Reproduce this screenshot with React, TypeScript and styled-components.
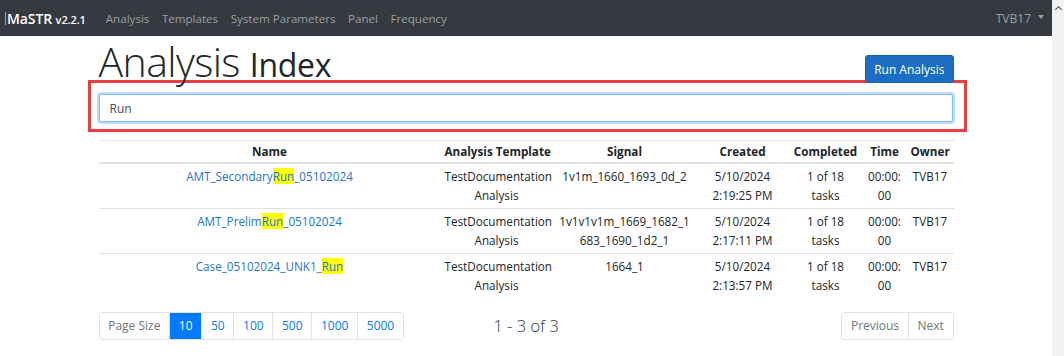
import React from 'react';
import styled, { createGlobalStyle } from 'styled-components';

const GlobalStyle = createGlobalStyle`
  html, body {
    margin: 0;
    padding: 0;
    background: #fff;
    font-family: "Open Sans", "Noto Sans", Arial, sans-serif;
    color: #212529;
    font-size: 12px;
  }
  * { box-sizing: border-box; }
`;

const rows = [
  {
    before: 'AMT_Secondary',
    after: '_05102024',
    template: 'TestDocumentation Analysis',
    signal: '1v1m_1660_1693_0d_2',
    date: '5/10/2024',
    time: '2:19:25 PM',
  },
  {
    before: 'AMT_Prelim',
    after: '_05102024',
    template: 'TestDocumentation Analysis',
    signal: '1v1v1v1m_1669_1682_1683_1690_1d2_1',
    date: '5/10/2024',
    time: '2:17:11 PM',
  },
  {
    before: 'Case_05102024_UNK1_',
    after: '',
    template: 'TestDocumentation Analysis',
    signal: '1664_1',
    date: '5/10/2024',
    time: '2:13:57 PM',
  },
];

const columns = [
  { label: 'Name', width: 342 },
  { label: 'Analysis Template', width: 112 },
  { label: 'Signal', width: 144 },
  { label: 'Created', width: 92 },
  { label: 'Completed', width: 74 },
  { label: 'Time', width: 44 },
  { label: 'Owner', width: 47 },
];

const pageSizes = [10, 50, 100, 500, 1000, 5000];

const App = () => {
  return (
    <>
      <GlobalStyle />
      <Viewport>
        <Page>
          <NavBar>
            <Brand>
              MaSTR <Version>v2.2.1</Version>
            </Brand>
            <NavLinks>
              <NavLink>Analysis</NavLink>
              <NavLink>Templates</NavLink>
              <NavLink>System Parameters</NavLink>
              <NavLink>Panel</NavLink>
              <NavLink>Frequency</NavLink>
            </NavLinks>
            <UserMenu>
              TVB17 <Caret />
            </UserMenu>
          </NavBar>

          <Container>
            <TitleRow>
              <Title>
                Analysis <TitleSub>Index</TitleSub>
              </Title>
              <PrimaryButton>Run Analysis</PrimaryButton>
            </TitleRow>

            <SearchFrame>
              <SearchInput defaultValue="Run" />
            </SearchFrame>

            <Table>
              <colgroup>
                {columns.map((c) => (
                  <col key={c.label} style={{ width: c.width }} />
                ))}
              </colgroup>
              <thead>
                <tr>
                  {columns.map((c) => (
                    <Th key={c.label}>{c.label}</Th>
                  ))}
                </tr>
              </thead>
              <tbody>
                {rows.map((r, idx) => (
                  <tr key={idx}>
                    <Td>
                      <NameLink>
                        {r.before}
                        <Highlight>Run</Highlight>
                        {r.after}
                      </NameLink>
                    </Td>
                    <Td>{r.template}</Td>
                    <Td $breakAnywhere>{r.signal}</Td>
                    <Td>
                      {r.date}
                      <br />
                      {r.time}
                    </Td>
                    <Td>1 of 18 tasks</Td>
                    <Td>
                      00:00:
                      <wbr />
                      00
                    </Td>
                    <Td>TVB17</Td>
                  </tr>
                ))}
              </tbody>
            </Table>

            <PagerRow>
              <PageGroup>
                <PageItem $muted>Page Size</PageItem>
                {pageSizes.map((s) => (
                  <PageItem key={s} $active={s === 10}>
                    {s}
                  </PageItem>
                ))}
              </PageGroup>
              <Count>1 - 3 of 3</Count>
              <PageGroup $right>
                <PageItem $muted>Previous</PageItem>
                <PageItem $muted>Next</PageItem>
              </PageGroup>
            </PagerRow>
          </Container>
        </Page>

        <ScrollTrack>
          <ScrollArrow />
        </ScrollTrack>
      </Viewport>
    </>
  );
};

export default App;

const Viewport = styled.div`
  display: flex;
  width: 1064px;
  height: 356px;
  overflow: hidden;
`;

const Page = styled.div`
  flex: 1;
  min-width: 0;
`;

const ScrollTrack = styled.div`
  width: 12px;
  background: #f1f1f1;
  display: flex;
  justify-content: center;
  padding-top: 5px;
`;

const ScrollArrow = styled.div`
  width: 5px;
  height: 5px;
  border-left: 1.5px solid #505050;
  border-top: 1.5px solid #505050;
  transform: rotate(45deg);
  margin-top: 2px;
`;

const NavBar = styled.nav`
  display: flex;
  align-items: center;
  height: 36px;
  background: #343a40;
  padding: 0 8px 0 7px;
`;

const Brand = styled.div`
  position: relative;
  color: #fff;
  font-size: 14px;
  font-weight: 600;
  letter-spacing: -0.1px;
  &::before {
    content: '';
    position: absolute;
    left: -2px;
    top: 3px;
    width: 1px;
    height: 13px;
    background: #9aa0a6;
  }
`;

const Version = styled.span`
  font-size: 11px;
  font-weight: 600;
`;

const NavLinks = styled.div`
  display: flex;
  gap: 12.5px;
  margin-left: 20px;
`;

const NavLink = styled.a`
  color: #9b9ea2;
  font-size: 11.6px;
  cursor: pointer;
`;

const UserMenu = styled.div`
  margin-left: auto;
  display: flex;
  align-items: center;
  gap: 7px;
  color: #9b9ea2;
  font-size: 12px;
`;

const Caret = styled.span`
  width: 0;
  height: 0;
  border-left: 3.5px solid transparent;
  border-right: 3.5px solid transparent;
  border-top: 4px solid #9b9ea2;
  margin-top: -2px;
`;

const Container = styled.main`
  width: 855px;
  margin: 0 auto;
`;

const TitleRow = styled.div`
  display: flex;
  justify-content: space-between;
  align-items: flex-start;
  height: 44px;
`;

const Title = styled.h1`
  margin: 0 0 0 0;
  font-size: 41px;
  font-weight: 300;
  line-height: 50px;
  letter-spacing: -0.6px;
  color: #212529;
  white-space: nowrap;
`;

const TitleSub = styled.span`
  font-size: 32px;
  font-weight: 400;
  letter-spacing: -0.3px;
`;

const PrimaryButton = styled.button`
  margin-top: 19px;
  height: 28px;
  padding: 0 8px;
  background: #1b6ec2;
  border: 1px solid #1861ac;
  border-radius: 3px;
  color: #fff;
  font-family: inherit;
  font-size: 12px;
  cursor: pointer;
`;

const SearchFrame = styled.div`
  margin: 0 -13px 0 -11px;
  border: 3px solid #e8403f;
  padding: 11px 11px 7px 8px;
`;

const SearchInput = styled.input`
  display: block;
  width: 100%;
  height: 28px;
  padding: 0 10px;
  border: 1px solid #80bdff;
  border-radius: 2px;
  box-shadow: 0 0 0 2px rgba(0, 123, 255, 0.25);
  outline: none;
  font-family: inherit;
  font-size: 12px;
  color: #495057;
`;

const Table = styled.table`
  width: 855px;
  margin-top: 8px;
  border-collapse: collapse;
  table-layout: fixed;
`;

const Th = styled.th`
  padding: 1px 4px 1px;
  line-height: 19px;
  font-size: 11.7px;
  font-weight: 700;
  text-align: center;
  border-top: 1px solid #dee2e6;
  border-bottom: 2px solid #dee2e6;
  white-space: nowrap;
`;

const Td = styled.td<{ $breakAnywhere?: boolean }>`
  padding: 3px 4px;
  height: 45px;
  vertical-align: top;
  line-height: 19px;
  font-size: 11.7px;
  text-align: center;
  color: #212529;
  border-top: 1px solid #dee2e6;
  overflow-wrap: ${({ $breakAnywhere }) => ($breakAnywhere ? 'anywhere' : 'normal')};
`;

const NameLink = styled.a`
  color: #1b76d2;
  cursor: pointer;
`;

const Highlight = styled.mark`
  background: #ffff00;
  color: inherit;
  padding: 0;
`;

const PagerRow = styled.div`
  display: grid;
  grid-template-columns: 1fr auto 1fr;
  align-items: center;
  margin-top: 13px;
`;

const PageGroup = styled.div<{ $right?: boolean }>`
  display: flex;
  justify-self: ${({ $right }) => ($right ? 'end' : 'start')};
  border: 1px solid #dee2e6;
  border-radius: 3px;
  overflow: hidden;
  height: 28px;
`;

const PageItem = styled.span<{ $active?: boolean; $muted?: boolean }>`
  display: flex;
  align-items: center;
  padding: 0 8.7px;
  font-size: 12px;
  background: ${({ $active }) => ($active ? '#007bff' : '#fff')};
  color: ${({ $active, $muted }) => ($active ? '#fff' : $muted ? '#6c757d' : '#007bff')};
  & + & {
    border-left: 1px solid #dee2e6;
  }
`;

const Count = styled.div`
  font-size: 17px;
  font-weight: 300;
  color: #343a40;
  letter-spacing: -0.2px;
`;
